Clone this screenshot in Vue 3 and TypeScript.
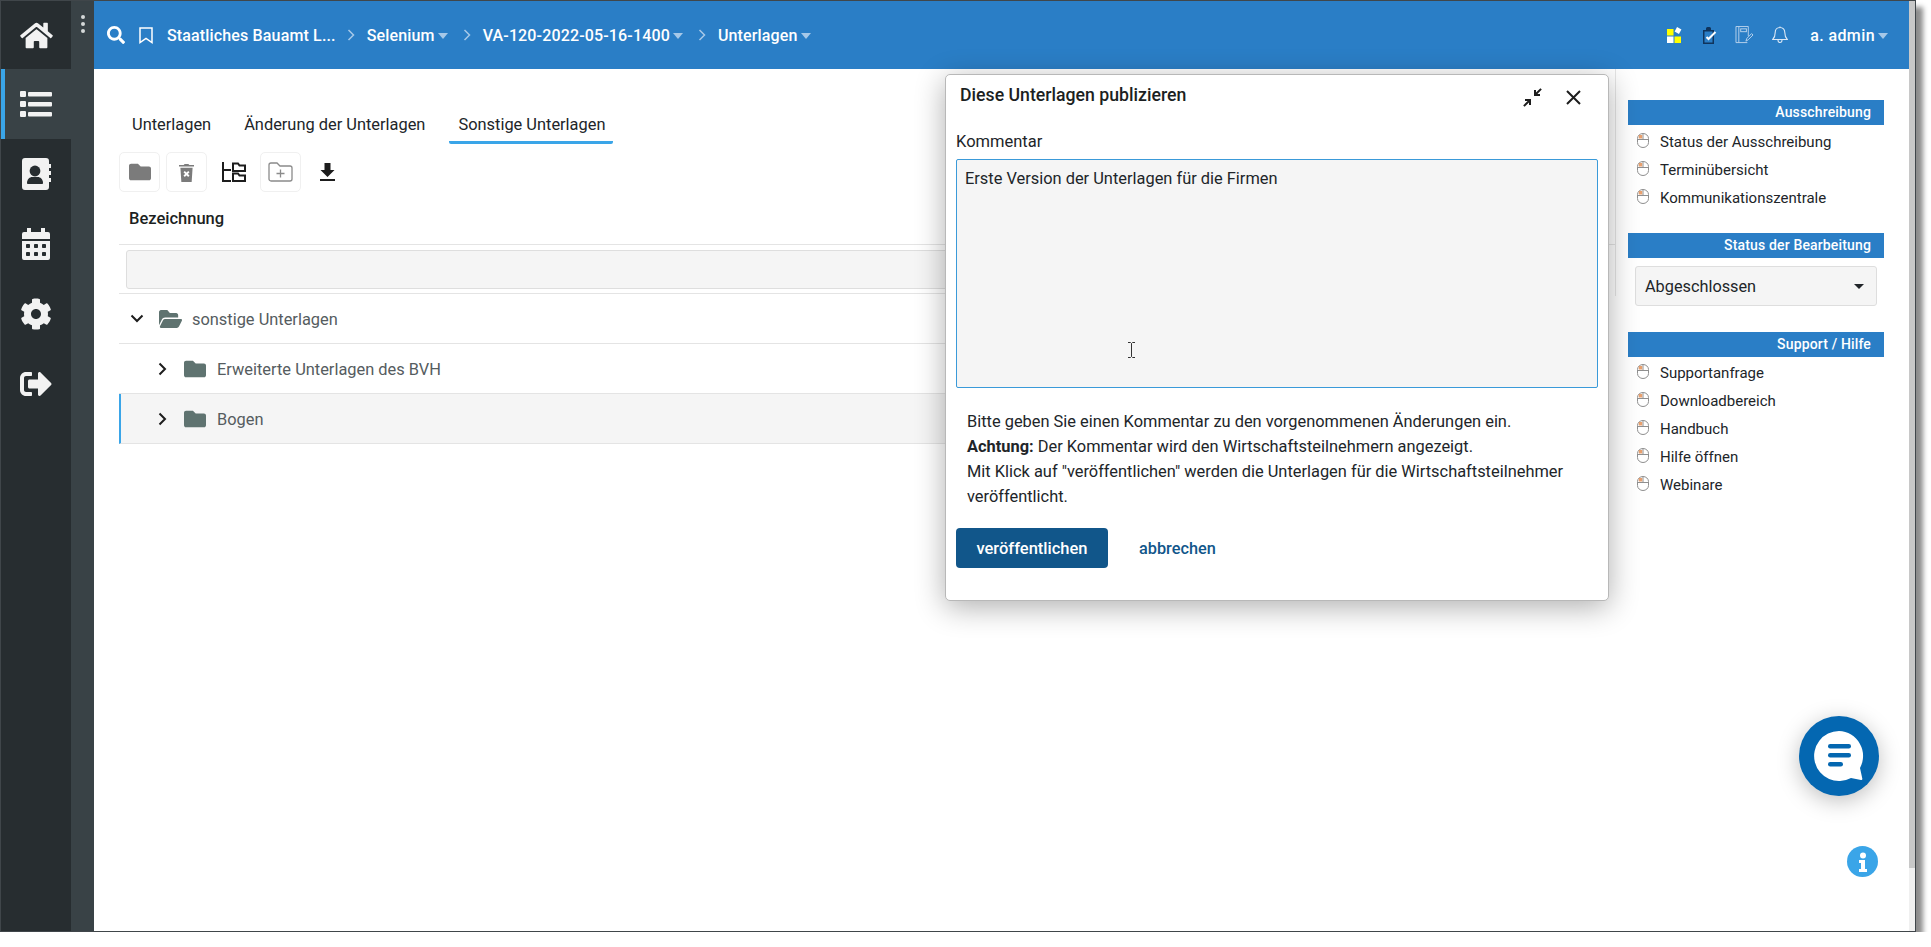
<script setup lang="ts">
const iconPaths = {
  folder: 'M464 128H272l-64-64H48C21.49 64 0 85.49 0 112v288c0 26.51 21.49 48 48 48h416c26.51 0 48-21.49 48-48V176c0-26.51-21.49-48-48-48z',
  folderOpen: 'M572.694 292.093L500.27 416.248A63.997 63.997 0 0 1 444.989 448H45.025c-18.523 0-30.064-20.093-20.731-36.093l72.424-124.155A64 64 0 0 1 152 256h399.964c18.523 0 30.064 20.093 20.73 36.093zM152 224h328v-48c0-26.51-21.49-48-48-48H272l-64-64H48C21.49 64 0 85.49 0 112v278.046l69.077-118.418C86.214 242.25 117.989 224 152 224z',
}
const auswahl: string[] = ['Status der Ausschreibung', 'Terminübersicht', 'Kommunikationszentrale']
const hilfe: string[] = ['Supportanfrage', 'Downloadbereich', 'Handbuch', 'Hilfe öffnen', 'Webinare']
</script>

<template>
  <div class="frame">
    <aside class="rail">
      <div class="rail-cell home">
        <svg viewBox="0 0 576 512" width="33" height="29"><path fill="#f2f2f2" d="M280.37 148.26L96 300.11V464a16 16 0 0 0 16 16l112.06-.29a16 16 0 0 0 15.92-16V368a16 16 0 0 1 16-16h64a16 16 0 0 1 16 16v95.64a16 16 0 0 0 16 16.05L464 480a16 16 0 0 0 16-16V300L295.67 148.26a12.19 12.19 0 0 0-15.3 0zM571.6 251.47L488 182.56V44.05a12 12 0 0 0-12-12h-56a12 12 0 0 0-12 12v72.61L318.47 43a48 48 0 0 0-61 0L4.34 251.47a12 12 0 0 0-1.6 16.9l25.5 31A12 12 0 0 0 45.15 301l235.22-193.74a12.19 12.19 0 0 1 15.3 0L530.9 301a12 12 0 0 0 16.9-1.6l25.5-31a12 12 0 0 0-1.7-16.93z"/></svg>
      </div>
      <div class="rail-cell active">
        <svg viewBox="0 0 32 27" width="32" height="27" fill="#f2f2f2">
          <rect x="0" y="0" width="6" height="6" rx="1"/><rect x="8" y="1" width="24" height="4.5" rx="1"/>
          <rect x="0" y="10" width="6" height="6" rx="1"/><rect x="8" y="11" width="24" height="4.5" rx="1"/>
          <rect x="0" y="20" width="6" height="6" rx="1"/><rect x="8" y="21" width="24" height="4.5" rx="1"/>
        </svg>
      </div>
      <div class="rail-cell">
        <svg viewBox="0 0 29 32" width="29" height="32">
          <path fill="#f2f2f2" d="M3 0h21a3 3 0 0 1 3 3v3h2v4h-2v3h2v4h-2v3h2v4h-2v5a3 3 0 0 1-3 3H3a3 3 0 0 1-3-3V3a3 3 0 0 1 3-3z"/>
          <circle cx="13" cy="13" r="5.4" fill="#272d30"/>
          <path fill="#272d30" d="M5 25c0-4 3-6 5-6h6c2 0 5 2 5 6 0 .8-.5 1-1 1H6c-.5 0-1-.2-1-1z"/>
        </svg>
      </div>
      <div class="rail-cell">
        <svg viewBox="0 0 28 32" width="28" height="32">
          <path fill="#f2f2f2" d="M5 0h4v4h10V0h4v4h3a2 2 0 0 1 2 2v5H0V6a2 2 0 0 1 2-2h3zM0 13h28v17a2 2 0 0 1-2 2H2a2 2 0 0 1-2-2z"/>
          <g fill="#272d30"><rect x="4" y="16" width="4" height="4" rx=".8"/><rect x="12" y="16" width="4" height="4" rx=".8"/><rect x="20" y="16" width="4" height="4" rx=".8"/><rect x="4" y="24" width="4" height="4" rx=".8"/><rect x="12" y="24" width="4" height="4" rx=".8"/><rect x="20" y="24" width="4" height="4" rx=".8"/></g>
        </svg>
      </div>
      <div class="rail-cell">
        <svg viewBox="0 0 512 512" width="32" height="32"><path fill="#f2f2f2" d="M487.4 315.7l-42.6-24.6c4.3-23.2 4.3-47 0-70.2l42.6-24.6c4.9-2.8 7.1-8.6 5.5-14-11.1-35.6-30-67.8-54.7-94.6-3.8-4.1-10-5.1-14.8-2.3L380.8 110c-17.9-15.4-38.5-27.3-60.8-35.1V25.8c0-5.6-3.9-10.5-9.4-11.7-36.7-8.2-74.3-7.8-109.2 0-5.5 1.2-9.4 6.1-9.4 11.7V75c-22.2 7.9-42.8 19.8-60.8 35.1L88.7 85.5c-4.9-2.8-11-1.9-14.8 2.3-24.7 26.7-43.6 58.9-54.7 94.6-1.7 5.4.6 11.2 5.5 14L67.3 221c-4.3 23.2-4.3 47 0 70.2l-42.6 24.6c-4.9 2.8-7.1 8.6-5.5 14 11.1 35.6 30 67.8 54.7 94.6 3.8 4.1 10 5.1 14.8 2.3l42.6-24.6c17.9 15.4 38.5 27.3 60.8 35.1v49.2c0 5.6 3.9 10.5 9.4 11.7 36.7 8.2 74.3 7.8 109.2 0 5.5-1.2 9.4-6.1 9.4-11.7v-49.2c22.2-7.9 42.8-19.8 60.8-35.1l42.6 24.6c4.9 2.8 11 1.9 14.8-2.3 24.7-26.7 43.6-58.9 54.7-94.6 1.5-5.5-.7-11.3-5.6-14.1zM256 336c-44.1 0-80-35.9-80-80s35.9-80 80-80 80 35.9 80 80-35.9 80-80 80z"/></svg>
      </div>
      <div class="rail-cell">
        <svg viewBox="0 0 512 512" width="32" height="32"><path fill="#f2f2f2" d="M497 273L329 441c-15 15-41 4.5-41-17v-96H152c-13.3 0-24-10.7-24-24v-96c0-13.3 10.7-24 24-24h136V88c0-21.4 25.9-32 41-17l168 168c9.3 9.4 9.3 24.6 0 34zM192 436v-40c0-6.6-5.4-12-12-12H96c-17.7 0-32-14.3-32-32V160c0-17.7 14.3-32 32-32h84c6.6 0 12-5.4 12-12V76c0-6.6-5.4-12-12-12H96c-53 0-96 43-96 96v192c0 53 43 96 96 96h84c6.6 0 12-5.4 12-12z"/></svg>
      </div>
    </aside>
    <div class="strip">
      <div class="strip-top"><i></i><i></i><i></i></div>
      <div class="strip-active"></div>
    </div>

    <div class="page">
      <header class="topbar">
        <svg class="t-search" viewBox="0 0 512 512" width="18" height="18"><path fill="#fff" d="M505 442.7L405.3 343c-4.5-4.5-10.6-7-17-7H372c27.6-35.3 44-79.7 44-128C416 93.1 322.9 0 208 0S0 93.1 0 208s93.1 208 208 208c48.3 0 92.7-16.4 128-44v16.3c0 6.4 2.5 12.5 7 17l99.7 99.7c9.4 9.4 24.6 9.4 33.9 0l28.3-28.3c9.4-9.4 9.4-24.6.1-34zM208 336c-70.7 0-128-57.2-128-128 0-70.7 57.2-128 128-128 70.7 0 128 57.2 128 128 0 70.7-57.2 128-128 128z"/></svg>
        <svg class="t-mark" viewBox="0 0 14 17" width="14" height="17"><path fill="none" stroke="#fff" stroke-width="1.5" d="M1 1h12v14.5L7 11.5 1 15.5z"/></svg>
        <span class="crumb">Staatliches Bauamt L...</span>
        <svg class="chev" viewBox="0 0 8 12" width="8" height="12"><path fill="none" stroke="#a6c8e8" stroke-width="1.5" d="M1.5 1l5 5-5 5"/></svg>
        <span class="crumb">Selenium</span><span class="caret"></span>
        <svg class="chev after-caret" viewBox="0 0 8 12" width="8" height="12"><path fill="none" stroke="#a6c8e8" stroke-width="1.5" d="M1.5 1l5 5-5 5"/></svg>
        <span class="crumb">VA-120-2022-05-16-1400</span><span class="caret"></span>
        <svg class="chev after-caret" viewBox="0 0 8 12" width="8" height="12"><path fill="none" stroke="#a6c8e8" stroke-width="1.5" d="M1.5 1l5 5-5 5"/></svg>
        <span class="crumb">Unterlagen</span><span class="caret"></span>
        <div class="top-right">
          <svg viewBox="0 0 16 16" width="16" height="16">
            <rect x="0" y="2" width="6.5" height="6.5" fill="#ffff00"/><rect x="0" y="9.5" width="6.5" height="6.5" fill="#fff"/><rect x="7.5" y="9.5" width="6.5" height="6.5" fill="#ffff00"/>
            <rect x="8.5" y="1" width="5" height="5" fill="#fff" transform="rotate(30 11 3.5)"/>
          </svg>
          <svg class="clip" viewBox="0 0 15 17" width="15" height="17">
            <path fill="#10345c" d="M1 3h3V1.500A1.500 1.500 0 0 1 5.500 0h2A1.500 1.500 0 0 1 9 1.500V3h3v14H1z"/>
            <path fill="#2a7ec6" d="M2.500 4.500h8V15.500h-8z"/>
            <path fill="none" stroke="#fff" stroke-width="2" d="M4.500 10l2 2 7-7"/>
          </svg>
          <svg class="note" viewBox="0 0 19 19" width="19" height="18">
            <g fill="none" stroke="#b9d3ec" stroke-width="1"><path d="M.5.500h13v10M.5.500v17h12M3.500.500v17"/><rect x="5.500" y="3" width="6" height="3"/><path d="M11 16l1-3 5-5 1.500 1.500-5 5z"/></g>
          </svg>
          <svg class="bell" viewBox="0 0 16 18" width="16" height="18"><path fill="none" stroke="#dbe8f5" stroke-width="1.100" d="M8 1.500c-3 0-4.800 2.200-4.800 5 0 4-1 5.500-2.500 7h14.600c-1.500-1.500-2.500-3-2.500-7 0-2.800-1.800-5-4.800-5zM6 14c0 1.300 1 2.500 2 2.500s2-1.200 2-2.500M8 1.500V.5"/></svg>
          <span class="crumb user">a. admin</span><span class="caret"></span>
        </div>
      </header>

      <div class="body">
        <main class="content">
          <nav class="tabs">
            <span class="tab">Unterlagen</span>
            <span class="tab">Änderung der Unterlagen</span>
            <span class="tab on">Sonstige Unterlagen</span>
          </nav>
          <div class="tools">
            <button class="tool">
              <svg viewBox="0 0 512 512" width="22" height="22"><path fill="#7b7b7b" :d="iconPaths.folder"/></svg>
            </button>
            <button class="tool">
              <svg viewBox="0 0 16 20" width="15" height="19"><path fill="#7b7b7b" d="M0 2h5l1-1h4l1 1h5v1.500H0zM1.500 5h13l-1 15h-11z"/><path stroke="#fff" stroke-width="2" d="M5.500 9l5 5M10.500 9l-5 5"/></svg>
            </button>
            <button class="tool plain">
              <svg viewBox="0 0 24 22" width="24" height="22"><g fill="none" stroke="#1d1d1d" stroke-width="2"><path d="M1 1v19h8M1 9h8"/><path d="M11 5V2.500h5l1.500 2H23V10H11zM11 15v-2.500h5l1.500 2H23V20H11z"/></g></svg>
            </button>
            <button class="tool">
              <svg viewBox="0 0 25 20" width="25" height="20"><path fill="none" stroke="#8b8b8b" stroke-width="1.300" d="M1 3a2 2 0 0 1 2-2h6l3 3h10a2 2 0 0 1 2 2v11a2 2 0 0 1-2 2H3a2 2 0 0 1-2-2z"/><path stroke="#8b8b8b" stroke-width="1.300" d="M12.500 7.500v8M8.500 11.500h8"/></svg>
            </button>
            <button class="tool plain">
              <svg viewBox="0 0 15 18" width="15" height="18"><path fill="#1d1d1d" d="M4.500 0h6v7h4l-7 7-7-7h4zM0 16h15v2H0z"/></svg>
            </button>
          </div>
          <div class="colhead">Bezeichnung</div>
          <div class="filter-row"><div class="filter"></div></div>
          <div class="row">
            <svg class="arrow" viewBox="0 0 14 9" width="14" height="9"><path fill="none" stroke="#1d1d1d" stroke-width="2" d="M1.500 1.500L7 7l5.500-5.500"/></svg>
            <svg class="ico-open" viewBox="0 64 576 384" preserveAspectRatio="none" width="23" height="18"><path fill="#5f7370" :d="iconPaths.folderOpen"/></svg>
            <span class="row-text">sonstige Unterlagen</span>
          </div>
          <div class="row sub">
            <svg class="arrow sm" viewBox="0 0 9 14" width="9" height="14"><path fill="none" stroke="#1d1d1d" stroke-width="2" d="M1.500 1.500L7 7l-5.500 5.500"/></svg>
            <svg class="ico-fold" viewBox="0 0 512 512" width="22" height="22"><path fill="#5f7370" :d="iconPaths.folder"/></svg>
            <span class="row-text">Erweiterte Unterlagen des BVH</span>
          </div>
          <div class="row sub selected">
            <svg class="arrow sm" viewBox="0 0 9 14" width="9" height="14"><path fill="none" stroke="#1d1d1d" stroke-width="2" d="M1.500 1.500L7 7l-5.500 5.500"/></svg>
            <svg class="ico-fold" viewBox="0 0 512 512" width="22" height="22"><path fill="#5f7370" :d="iconPaths.folder"/></svg>
            <span class="row-text">Bogen</span>
          </div>
        </main>

        <aside class="side">
          <h3 class="side-head">Ausschreibung</h3>
          <ul class="side-list">
            <li v-for="t in auswahl" :key="t">
              <svg viewBox="0 0 12 15" width="12" height="15"><path fill="none" stroke="#8f8f8f" stroke-width="1" d="M.5 5.500a5.500 5 0 0 1 11 0v4a5.500 5 0 0 1-11 0zM.5 6.500h11M6 .5v6"/><path fill="#e8a06e" d="M1.800 2h3.400v3.500H1.800z"/></svg>
              <span>{{ t }}</span>
            </li>
          </ul>
          <h3 class="side-head second">Status der Bearbeitung</h3>
          <div class="select"><span>Abgeschlossen</span><i class="sel-caret"></i></div>
          <h3 class="side-head third">Support / Hilfe</h3>
          <ul class="side-list tight">
            <li v-for="t in hilfe" :key="t">
              <svg viewBox="0 0 12 15" width="12" height="15"><path fill="none" stroke="#8f8f8f" stroke-width="1" d="M.5 5.500a5.500 5 0 0 1 11 0v4a5.500 5 0 0 1-11 0zM.5 6.500h11M6 .5v6"/><path fill="#e8a06e" d="M1.800 2h3.400v3.500H1.800z"/></svg>
              <span>{{ t }}</span>
            </li>
          </ul>
        </aside>
        <div class="scroll"><div class="thumb"></div></div>
      </div>

      <section class="modal">
        <div class="m-head">
          <h2>Diese Unterlagen publizieren</h2>
          <svg class="m-min" viewBox="0 0 19 19" width="19" height="19"><path fill="#1d1d1d" d="M11 8V2h2v2.600L17.400.2 18.800 1.600 14.400 6H17v2zM8 11v6H6v-2.600l-4.400 4.400L.2 17.400 4.600 13H2v-2z"/></svg>
          <svg class="m-close" viewBox="0 0 15 15" width="15" height="15"><path stroke="#1d1d1d" stroke-width="2" d="M1 1l13 13M14 1L1 14"/></svg>
        </div>
        <label class="m-label">Kommentar</label>
        <div class="m-area">Erste Version der Unterlagen für die Firmen
          <svg class="ibeam" viewBox="0 0 9 16" width="9" height="16"><path fill="none" stroke="#333" stroke-width="1" d="M1 .5h2.500l1 1 1-1H8M4.500 1.500v13M1 15.500h2.500l1-1 1 1H8"/></svg>
        </div>
        <p class="m-text">Bitte geben Sie einen Kommentar zu den vorgenommenen Änderungen ein.<br><b>Achtung:</b> Der Kommentar wird den Wirtschaftsteilnehmern angezeigt.<br>Mit Klick auf "veröffentlichen" werden die Unterlagen für die Wirtschaftsteilnehmer veröffentlicht.</p>
        <div class="m-actions">
          <button class="primary">veröffentlichen</button>
          <button class="link">abbrechen</button>
        </div>
      </section>

      <div class="chat">
        <svg viewBox="0 0 50 50" width="50" height="50">
          <path fill="#fff" d="M25 0a25 25 0 1 0 12 47l10 2c1 0 1.500-.5 1.300-1.500L46 37A25 25 0 0 0 25 0z"/>
          <g fill="#0467b1"><rect x="14" y="13" width="23" height="4.500" rx="2.200"/><rect x="14" y="22" width="23" height="4.500" rx="2.200"/><rect x="14" y="31" width="15" height="4.500" rx="2.200"/></g>
        </svg>
      </div>
      <div class="info">
        <svg viewBox="0 0 10 20" width="10" height="20"><circle cx="5" cy="3.500" r="3" fill="#fff"/><path fill="#fff" d="M1 8h6v9h2v3H1v-3h2v-6H1z"/></svg>
      </div>
    </div>
  </div>
</template>

<style>
html, body { margin: 0; background: #fff; overflow: hidden; }
</style>

<style scoped>
.frame {
  width: 1914px;
  height: 930px;
  border: 1px solid #40464a;
  display: flex;
  box-shadow: 7px 7px 5px rgba(0, 0, 0, .45);
  font-family: Roboto, "Liberation Sans", sans-serif;
  color: #212529;
  background: #fff;
}
.rail { width: 70px; background: #272d30; display: flex; flex-direction: column; flex: none; }
.rail-cell { height: 70px; display: flex; align-items: center; justify-content: center; flex: none; box-sizing: border-box; }
.rail-cell.home { height: 68px; }
.rail-cell.active { background: #394246; border-left: 4px solid #3aa5e8; padding-right: 4px; }
.strip { width: 23px; background: #394246; flex: none; }
.strip-top { height: 68px; display: flex; flex-direction: column; align-items: center; padding-top: 14px; box-sizing: border-box; gap: 3px; background: #394246; }
.strip-top i { width: 4px; height: 4px; border-radius: 50%; background: #d5d8d9; }
.strip-active { height: 70px; }
.page { flex: 1; position: relative; display: flex; flex-direction: column; min-width: 0; }
.topbar { height: 68px; flex: none; background: #2a7ec6; display: flex; align-items: center; color: #fff; padding-left: 13px; padding-right: 6px; margin-right: 6px; }
.t-search { margin-right: 14px; }
.t-mark { margin-right: 14px; }
.crumb { font-size: 16px; font-weight: 500; color: #fff; white-space: nowrap; letter-spacing: .15px; }
.chev { margin-left: 11px; margin-right: 12px; flex: none; }
.chev.after-caret { margin-left: 15px; }
.caret { width: 0; height: 0; border-left: 5.5px solid transparent; border-right: 5.5px solid transparent; border-top: 6px solid #a6c8e8; margin-left: 3px; margin-top: 2px; }
.top-right { margin-left: auto; display: flex; align-items: center; padding-right: 15px; }
.clip { margin-left: 19px; }
.note { margin-left: 18px; }
.bell { margin-left: 18px; }
.user { margin-left: 22px; letter-spacing: .4px; }
.body { flex: 1; display: flex; position: relative; min-height: 0; }
.content { width: 1496px; margin-left: 25px; flex: none; padding-top: 30px; border-right: 1px solid #e6e6e6; height: 197px; }
.tabs { display: flex; height: 45px; padding-left: 4px; }
.tab { font-size: 16.4px; padding: 16px 8px 0 9px; margin-right: 16px; height: 45px; box-sizing: border-box; white-space: nowrap; }
.tab.on { border-bottom: 3px solid #3aa5e8; border-radius: 0 0 2px 2px; }
.tools { display: flex; gap: 6px; margin-top: 8px; height: 40px; }
.tool { width: 41px; height: 40px; border: 1px solid #f0f0f0; border-radius: 5px; background: #fff; display: flex; align-items: center; justify-content: center; padding: 0; }
.tool.plain { border-color: transparent; }
.colhead { font-size: 16.5px; font-weight: 500; padding-left: 10px; height: 53px; box-sizing: border-box; padding-top: 17px; border-bottom: 1px solid #e4e4e4; color: #1c1f22; }
.filter-row { height: 49px; padding: 5px 0 0 7px; box-sizing: border-box; border-bottom: 1px solid #e4e4e4; width: 1200px; }
.filter { height: 39px; box-sizing: border-box; border: 1px solid #dedede; border-radius: 3px; background: #f5f5f5; }
.row { width: 1200px; height: 50px; box-sizing: border-box; border-bottom: 1px solid #e4e4e4; display: flex; align-items: center; padding-left: 11px; color: #555c60; font-size: 16.4px; }
.row-text { padding-top: 1px; white-space: nowrap; }
.row.sub { padding-left: 39px; }
.row.selected { background: #f5f5f5; border-left: 2px solid #3aa5e8; padding-left: 37px; }
.arrow { margin-right: 15px; }
.arrow.sm { margin-right: 17px; }
.ico-open { margin-right: 10px; }
.ico-fold { margin-right: 11px; }
.side { width: 256px; margin-left: 12px; padding-top: 31px; flex: none; }
.side-head { margin: 0; height: 25px; background: #2a7ec6; color: #fff; font-size: 14px; font-weight: 500; line-height: 25px; text-align: right; padding-right: 13px; letter-spacing: .15px; }
.side-head.second { margin-top: 21px; }
.side-head.third { margin-top: 26px; }
.side-list { list-style: none; margin: 0; padding: 3px 0 0 9px; }
.side-list.tight { padding-top: 2px; }
.side-list li { height: 28px; display: flex; align-items: center; font-size: 15px; color: #212529; }
.side-list svg { margin-right: 11px; margin-top: -3px; }
.select { margin: 8px 7px 0; height: 40px; box-sizing: border-box; border: 1px solid #dedede; border-radius: 3px; background: #f5f5f5; display: flex; align-items: center; justify-content: space-between; padding: 0 12px 0 9px; font-size: 16.3px; }
.sel-caret { width: 0; height: 0; border-left: 5px solid transparent; border-right: 5px solid transparent; border-top: 5px solid #212529; }
.scroll { position: absolute; right: 0; top: -68px; bottom: 0; width: 6px; background: #f0f0f0; }
.thumb { height: 867px; background: #c8c8c8; }
.modal { position: absolute; left: 851px; top: 73px; width: 664px; height: 527px; box-sizing: border-box; background: #fff; border: 1px solid #b8b8b8; border-radius: 5px; box-shadow: 0 6px 30px rgba(0, 0, 0, .32); padding: 0 9px 0 10px; }
.m-head { display: flex; align-items: flex-start; height: 56px; box-sizing: border-box; padding: 8px 0 0 4px; }
.m-head h2 { margin: 0; font-size: 17.7px; font-weight: 500; flex: 1; color: #1c1f22; line-height: 24px; }
.m-min { margin-top: 5px; margin-right: 24px; }
.m-close { margin-top: 7px; margin-right: 18px; }
.m-label { display: block; font-size: 16.5px; height: 28px; line-height: 22px; color: #212529; }
.m-area { position: relative; width: 642px; height: 229px; box-sizing: border-box; border: 1px solid #3a9ad9; border-radius: 2px; background: #f5f5f5; padding: 9px 8px; font-size: 16.4px; line-height: 20px; color: #212529; }
.ibeam { position: absolute; left: 170px; top: 182px; }
.m-text { margin: 21px 0 0 11px; width: 625px; font-size: 16.4px; line-height: 25px; color: #212529; }
.m-text b { font-weight: 700; }
.m-actions { display: flex; margin-top: 19px; align-items: center; }
.primary { width: 152px; height: 40px; border: 0; border-radius: 4px; background: #11568a; color: #fff; font: 500 16.5px Roboto, sans-serif; }
.link { border: 0; background: none; color: #11568a; font: 500 16.3px Roboto, sans-serif; margin-left: 31px; padding: 0; }
.chat { position: absolute; left: 1705px; top: 715px; width: 80px; height: 80px; border-radius: 50%; background: #0467b1; display: flex; align-items: center; justify-content: center; box-shadow: 0 5px 22px rgba(0, 0, 0, .25); }
.info { position: absolute; left: 1753px; top: 845px; width: 31px; height: 31px; border-radius: 50%; background: #3aa5e8; display: flex; align-items: center; justify-content: center; }
</style>
